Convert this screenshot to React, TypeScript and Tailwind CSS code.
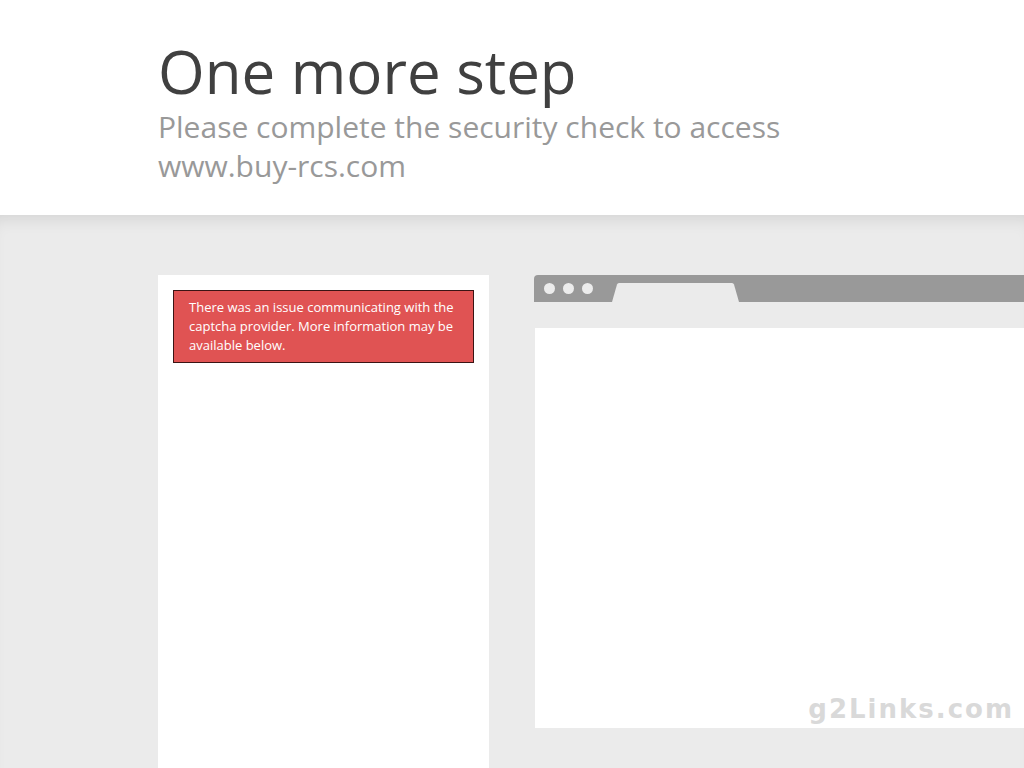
import React from 'react';

const sans = { fontFamily: '"Open Sans", "Noto Sans", sans-serif' };

function BrowserMock() {
  return (
    <div className="relative flex-1 min-w-[560px]">
      <div className="relative h-[27px] bg-[#999999] rounded-tl-[4px] flex items-center gap-2 pl-[10px]">
        <span className="w-[11px] h-[11px] rounded-full bg-[#ececec]" />
        <span className="w-[11px] h-[11px] rounded-full bg-[#ececec]" />
        <span className="w-[11px] h-[11px] rounded-full bg-[#ececec]" />
        <svg className="absolute left-[78px] bottom-0" width="128" height="19" viewBox="0 0 128 19">
          <path d="M0 19 L5 1.5 Q5.5 0 7 0 L120 0 Q121.5 0 122 1.5 L127 19 Z" fill="#ebebeb" />
        </svg>
      </div>
      <div className="h-[26px]" />
      <div className="h-[400px] bg-white ml-px" />
    </div>
  );
}

export default function App() {
  return (
    <div className="relative min-h-[768px] h-[768px] overflow-hidden bg-[#ebebeb]" style={sans}>
      <header className="bg-white pt-[35px] pb-[30px] pl-[158px] relative z-10">
        <h1 className="text-[60px] leading-[72px] font-normal text-[#404040]">One more step</h1>
        <h2 className="text-[30px] leading-[39px] font-normal text-[#999999] w-[640px]">
          Please complete the security check to access www.buy-rcs.com
        </h2>
      </header>
      <main className="h-full pt-[60px] pl-[158px] flex gap-[45px] shadow-[inset_0_14px_18px_-12px_rgba(0,0,0,0.12)]">
        <section className="w-[331px] shrink-0 bg-white h-[600px] p-[15px]">
          <div className="bg-[#e05353] border border-[#3b1414] pt-[7px] pb-[7px] pl-[15px] pr-[10px] text-[13px] leading-[19px] text-white">
            There was an issue communicating with the captcha provider. More information may be available below.
          </div>
        </section>
        <BrowserMock />
      </main>
      <span
        className="absolute right-[10px] bottom-[44px] z-20 text-[26px] leading-[30px] font-bold tracking-[2px] text-[#d9d9d9] select-none"
        style={{ fontFamily: '"DejaVu Sans", Verdana, sans-serif' }}
      >
        g2Links.com
      </span>
    </div>
  );
}
